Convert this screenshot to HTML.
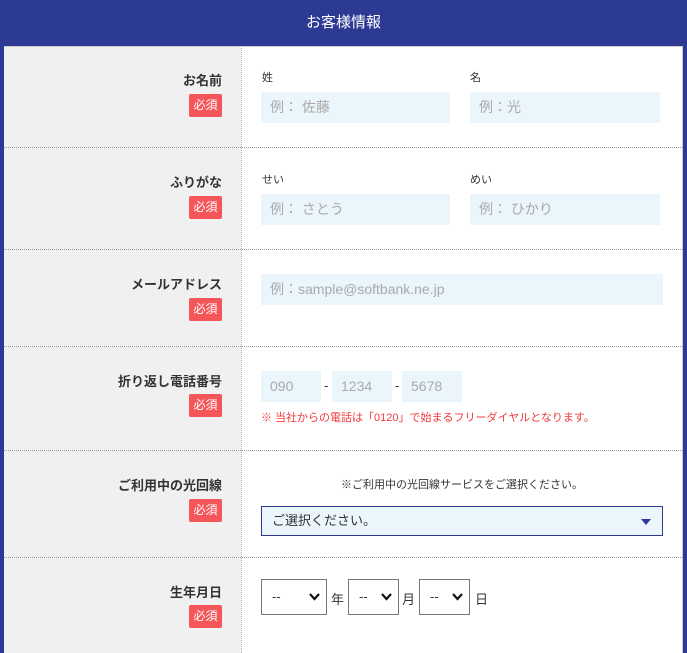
<!DOCTYPE html><html><head><meta charset="utf-8"><style>
*{margin:0;padding:0;box-sizing:border-box}
body{width:687px;height:653px;overflow:hidden;background:#fff;font-family:"Liberation Sans","Noto Sans CJK JP",sans-serif;position:relative}
.a{position:absolute}
.hd{left:0;top:0;width:687px;height:46px;background:#2c3a94;color:#fff;font-size:15px;text-align:center;line-height:46px}
.lb{right:465px;font-size:13px;font-weight:bold;color:#333;white-space:nowrap}
.bd{left:189px;width:33px;height:23px;background:#f5565a;color:#fff;font-size:12px;text-align:center;line-height:23px;border-radius:2px}
.in{background:#eaf6fb;color:#aaa;font-size:14px;padding-left:9px;line-height:31px;height:31px}
.sl{font-size:11px;color:#333}
.hr{left:4px;width:679px;height:0;border-top:1px dotted #999}
.sel{height:36px;border:1px solid #777;background:#fff;font-size:13px;color:#333;padding-left:10px;line-height:34px}
.sel svg{position:absolute;right:6px;top:13px}
</style></head><body>
<div class="a" style="left:0;top:0;width:4px;height:653px;background:#2c3a94"></div>
<div class="a" style="left:683px;top:0;width:4px;height:653px;background:#2c3a94"></div>
<div class="a" style="left:4px;top:46px;width:237px;height:607px;background:#f0f0f0"></div>
<div class="a" style="left:241px;top:46px;width:0;height:607px;border-left:1px dotted #aaa"></div>
<div class="a" style="left:682px;top:46px;width:1px;height:607px;background:#ccc"></div>
<div class="a" style="left:4px;top:46px;width:679px;height:1px;background:#ccc"></div>
<div class="a hd">お客様情報</div>

<div class="a hr" style="top:147px"></div>
<div class="a hr" style="top:249px"></div>
<div class="a hr" style="top:346px"></div>
<div class="a hr" style="top:450px"></div>
<div class="a hr" style="top:557px"></div>

<div class="a lb" style="top:70px">お名前</div><div class="a bd" style="top:94px">必須</div>
<div class="a sl" style="left:262px;top:69px">姓</div><div class="a sl" style="left:470px;top:69px">名</div>
<div class="a in" style="left:261px;top:92px;width:189px">例： 佐藤</div>
<div class="a in" style="left:470px;top:92px;width:190px">例：光</div>

<div class="a lb" style="top:172px">ふりがな</div><div class="a bd" style="top:196px">必須</div>
<div class="a sl" style="left:262px;top:171px">せい</div><div class="a sl" style="left:470px;top:171px">めい</div>
<div class="a in" style="left:261px;top:194px;width:189px">例： さとう</div>
<div class="a in" style="left:470px;top:194px;width:190px">例： ひかり</div>

<div class="a lb" style="top:274px">メールアドレス</div><div class="a bd" style="top:298px">必須</div>
<div class="a in" style="left:261px;top:274px;width:402px">例：sample@softbank.ne.jp</div>

<div class="a lb" style="top:371px">折り返し電話番号</div><div class="a bd" style="top:394px">必須</div>
<div class="a in" style="left:261px;top:371px;width:60px">090</div>
<div class="a" style="left:324px;top:378px;font-size:13px;color:#333">-</div>
<div class="a in" style="left:332px;top:371px;width:60px">1234</div>
<div class="a" style="left:395px;top:378px;font-size:13px;color:#333">-</div>
<div class="a in" style="left:402px;top:371px;width:60px">5678</div>
<div class="a" style="left:261px;top:409px;font-size:11px;color:#f03a3a;white-space:nowrap">※ 当社からの電話は「0120」で始まるフリーダイヤルとなります。</div>

<div class="a lb" style="top:475px">ご利用中の光回線</div><div class="a bd" style="top:499px">必須</div>
<div class="a" style="left:242px;width:440px;top:476px;font-size:11px;color:#333;text-align:center">※ご利用中の光回線サービスをご選択ください。</div>
<div class="a" style="left:261px;top:506px;width:402px;height:30px;border:1px solid #2c3a94;background:#eaf6fb;font-size:13px;color:#333;padding-left:10px;line-height:28px">ご選択ください。<svg width="10" height="6" style="position:absolute;right:11px;top:12px"><path d="M0 0H10L5 6Z" fill="#2c3a94"/></svg></div>

<div class="a lb" style="top:582px">生年月日</div><div class="a bd" style="top:605px">必須</div>
<div class="a sel" style="left:261px;top:579px;width:66px">--<svg width="11" height="8"><path d="M1 1L5.5 6L10 1" stroke="#111" stroke-width="2.2" fill="none"/></svg></div>
<div class="a" style="left:331px;top:589px;font-size:13px;color:#333">年</div>
<div class="a sel" style="left:348px;top:579px;width:51px">--<svg width="11" height="8"><path d="M1 1L5.5 6L10 1" stroke="#111" stroke-width="2.2" fill="none"/></svg></div>
<div class="a" style="left:402px;top:589px;font-size:13px;color:#333">月</div>
<div class="a sel" style="left:419px;top:579px;width:51px">--<svg width="11" height="8"><path d="M1 1L5.5 6L10 1" stroke="#111" stroke-width="2.2" fill="none"/></svg></div>
<div class="a" style="left:475px;top:589px;font-size:13px;color:#333">日</div>
</body></html>
